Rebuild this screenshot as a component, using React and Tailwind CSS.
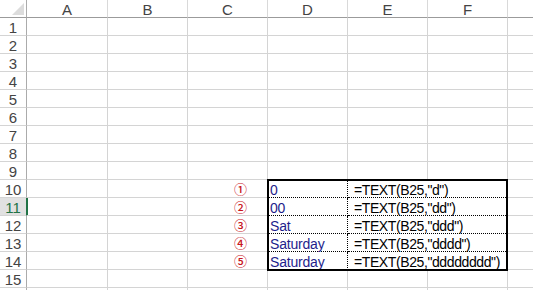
const COLS = ['A', 'B', 'C', 'D', 'E', 'F']
const grid = 'border-[#d4d4d4]'

const table = {
  10: ['①', '0', '=TEXT(B25,"d")'],
  11: ['②', '00', '=TEXT(B25,"dd")'],
  12: ['③', 'Sat', '=TEXT(B25,"ddd")'],
  13: ['④', 'Saturday', '=TEXT(B25,"dddd")'],
  14: ['⑤', 'Saturday', '=TEXT(B25,"dddddddd")'],
}

function ColHeader() {
  return (
    <div className="flex h-[18px]">
      <div className="w-[27px] shrink-0 border-r border-b border-r-[#ababab] border-b-[#9b9b9b] flex items-end justify-end p-[2px]">
        <svg width="12" height="12" viewBox="0 0 12 12">
          <polygon points="12,0 12,12 0,12" fill="#dcdcdc" />
        </svg>
      </div>
      {COLS.map((c, i) => (
        <div
          key={c}
          className={`${i === 0 ? 'w-[81px]' : 'w-[80px]'} shrink-0 border-r border-b border-r-[#d9d9d9] border-b-[#9b9b9b] flex items-end justify-center text-[15px] leading-[15px] text-[#444]`}
        >
          {c}
        </div>
      ))}
      <div className="flex-1 border-b border-b-[#9b9b9b]" />
    </div>
  )
}

function Row({ n, label = true }) {
  const t = table[n]
  const sel = n === 11
  return (
    <div className="flex h-[18px]">
      <div
        className={`w-[27px] shrink-0 border-b border-r ${grid} flex items-end justify-center text-[15px] leading-[15px] ${
          sel
            ? 'bg-[#e1e1e1] text-[#217346] border-r-[#217346] shadow-[1px_0_0_#217346]'
            : 'text-[#444] border-r-[#ababab]'
        }`}
      >
        {label ? n : ''}
      </div>
      <div className={`w-[81px] shrink-0 border-r border-b ${grid}`} />
      <div className={`w-[80px] shrink-0 border-r border-b ${grid}`} />
      <div
        className={`w-[80px] shrink-0 border-r border-b ${grid} flex items-center justify-end pr-[20px] font-['Noto_Sans_CJK_JP',sans-serif] font-medium text-[13px] leading-[14px] text-[#c8161d]`}
      >
        {t ? t[0] : ''}
      </div>
      {t ? (
        <>
          <div
            className={`w-[80px] shrink-0 border-r border-b border-r-black ${n < 14 ? 'border-b-black' : grid} border-dotted flex items-end pl-[2px] text-[14px] leading-[14px] tracking-[-0.2px] text-[#1e1e8c] whitespace-nowrap`}
          >
            {t[1]}
          </div>
          <div
            className={`w-[160px] shrink-0 border-r border-b ${grid} ${n < 14 ? 'border-b-black' : ''} flex items-end pl-[6px] text-[14px] leading-[14px] tracking-[-0.4px] text-black whitespace-nowrap`}
            style={n < 14 ? { borderBottomStyle: 'dotted' } : undefined}
          >
            {t[2]}
          </div>
        </>
      ) : (
        <>
          <div className={`w-[80px] shrink-0 border-r border-b ${grid}`} />
          <div className={`w-[80px] shrink-0 border-r border-b ${grid}`} />
          <div className={`w-[80px] shrink-0 border-r border-b ${grid}`} />
        </>
      )}
      <div className={`flex-1 border-b ${grid}`} />
    </div>
  )
}

export default function App() {
  const rows = Array.from({ length: 15 }, (_, i) => i + 1)
  return (
    <div className="relative w-[533px] h-[290px] overflow-hidden bg-white font-['Liberation_Sans',Arial,sans-serif]">
      <ColHeader />
      {rows.map((n) => (
        <Row key={n} n={n} />
      ))}
      <Row n={16} label={false} />
      <div className="absolute left-[267px] top-[179px] w-[241px] h-[92px] border-2 border-black pointer-events-none" />
    </div>
  )
}
